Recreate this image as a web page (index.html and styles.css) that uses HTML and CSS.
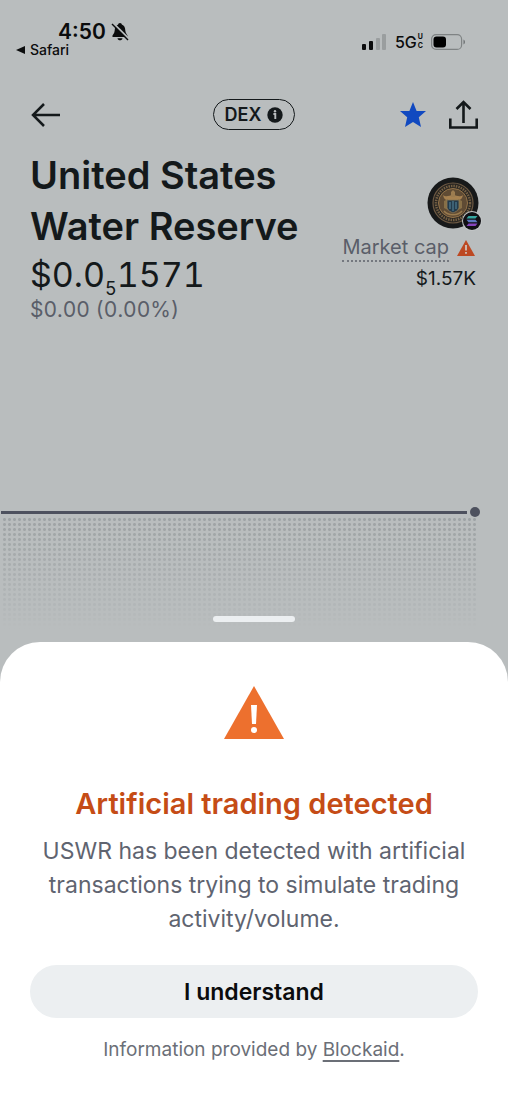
FILE: index.html
```html
<!DOCTYPE html>
<html lang="en">
<head>
    <meta charset="UTF-8">
    <meta name="viewport" content="width=device-width, initial-scale=1.0">
    <title>United States Water Reserve</title>
    <link rel="stylesheet" href="styles.css">
</head>
<body>
    <div class="status-bar">
        <div class="status-left">
            <div class="clock">
                <span>4:50</span>
                <svg width="18" height="20" viewBox="0 0 18 20">
                    <path d="M9 1C7.800 1 7.200 1.800 7.200 2.600C4.600 3.500 3.800 5.700 3.700 8.400C3.600 11.500 1.300 12.800 1.300 14.200C1.300 14.800 1.700 15 2.300 15H15.700C16.300 15 16.700 14.800 16.700 14.200C16.700 12.800 14.400 11.500 14.300 8.400C14.200 5.700 13.400 3.500 10.800 2.600C10.800 1.800 10.200 1 9 1ZM6.500 16.300C6.800 19 11.200 19 11.500 16.300Z" fill="#0b0c0d"/>
                    <path d="M2 1L18 17" stroke="#b9bdbe" stroke-width="2"/>
                    <path d="M1 2L17 18" stroke="#0b0c0d" stroke-width="1.500"/>
                </svg>
            </div>
            <a class="back-app" href="#">
                <svg width="10" height="8" viewBox="0 0 10 8"><path d="M0 4L9 0V8Z" fill="#0b0c0d"/></svg>
                Safari
            </a>
        </div>
        <div class="status-right">
            <svg width="25" height="16" viewBox="0 0 25 16">
                <rect x="0" y="10" width="4" height="6" rx="1" fill="#0b0c0d"/>
                <rect x="7" y="7" width="4" height="9" rx="1" fill="#0b0c0d"/>
                <rect x="14" y="4" width="4" height="12" rx="1" fill="#9a9e9f"/>
                <rect x="20" y="0" width="4" height="16" rx="1" fill="#9a9e9f"/>
            </svg>
            <div class="network">
                <span>5G</span>
                <span class="network-uc"><span>U</span><span>C</span></span>
            </div>
            <svg width="35" height="16" viewBox="0 0 35 16">
                <rect x="0.600" y="0.600" width="30" height="14.800" rx="4.500" fill="none" stroke="#7f8384" stroke-width="1.200"/>
                <rect x="2.500" y="2.500" width="12.500" height="11" rx="3" fill="#000"/>
                <path d="M32.500 5.500C34.500 6.500 34.500 9.500 32.500 10.500Z" fill="#6d7172"/>
            </svg>
        </div>
    </div>

    <div class="nav">
        <button class="icon-btn" aria-label="Back">
            <svg width="30" height="24" viewBox="0 0 30 24" fill="none" stroke="#14191b" stroke-width="2.500">
                <path d="M30 12H3M14 1L3 12L14 23"/>
            </svg>
        </button>
        <button class="dex">
            DEX
            <svg width="16" height="16" viewBox="0 0 16 16">
                <circle cx="8" cy="8" r="7.700" fill="#14191b"/>
                <circle cx="8" cy="4.300" r="1.200" fill="#b9bdbe"/>
                <path d="M6.400 7H8.300V12" fill="none" stroke="#b9bdbe" stroke-width="1.900"/>
            </svg>
        </button>
        <div class="nav-actions">
            <button class="icon-btn" aria-label="Favorite">
                <svg width="26" height="26" viewBox="0 0 26 26">
                    <path d="M13 0L16.600 9H26L18.800 15.300L21 25L13 20L5 25L7.200 15.300L0 9H9.400Z" fill="#1149c0"/>
                </svg>
            </button>
            <button class="icon-btn" aria-label="Share">
                <svg width="29" height="29" viewBox="0 0 29 29" fill="none" stroke="#14191b" stroke-width="2.600">
                    <path d="M14.500 23V2M7.500 9L14.500 2L21.500 9M1.300 18.500V27.500H27.700V18.500"/>
                </svg>
            </button>
        </div>
    </div>

    <div class="asset">
        <div class="asset-info">
            <h1>United States Water Reserve</h1>
            <div class="price">$0.0<sub>5</sub>1571</div>
            <div class="change">$0.00 (0.00%)</div>
        </div>
        <div class="asset-side">
            <svg class="token" width="56" height="56" viewBox="0 0 56 56">
                <circle cx="26" cy="26" r="25.500" fill="#17191a"/>
                <circle cx="26" cy="26" r="20" fill="#292622" stroke="#6d5943" stroke-width="1.200"/>
                <circle cx="26" cy="26" r="17" fill="none" stroke="#756044" stroke-width="2.500" stroke-dasharray="1.500 1"/>
                <circle cx="26" cy="26" r="14.500" fill="#5f4b34" stroke="#94744a" stroke-width="1"/>
                <path d="M16 18C20 21 22 18 26 18C30 18 32 21 36 18C35 23 32 24 26 23C20 24 17 23 16 18Z" fill="#a68150"/>
                <path d="M24 15L26 13L28 15V20H24Z" fill="#9c7c50"/>
                <path d="M17 24L21 22V33L17 31ZM35 24L31 22V33L35 31Z" fill="#887047"/>
                <path d="M20 23H32V31C31 34 28 35 26 36C24 35 21 34 20 31Z" fill="#243a4a" stroke="#8b7654" stroke-width="0.800"/>
                <path d="M23 25V32M29 25V32M26 24V34" stroke="#4c768b" stroke-width="1.300"/>
                <path d="M17 34C21 39 31 39 35 34" fill="none" stroke="#9a7b4e" stroke-width="1.500"/>
                <circle cx="45" cy="44" r="10" fill="#c3c7c8"/>
                <circle cx="45" cy="44" r="9" fill="#101014"/>
                <path d="M41.500 39H50.500L48.500 41.500H39.500Z" fill="#35a6a0"/>
                <path d="M39.500 42.800H48.500L50.500 45.300H41.500Z" fill="#5c77c0"/>
                <path d="M41.500 46.500H50.500L48.500 49H39.500Z" fill="#8745bd"/>
            </svg>
            <div class="market-cap">
                <a href="#">Market cap</a>
                <svg width="18" height="16" viewBox="0 0 18 16">
                    <path d="M9 0L18 16H0Z" fill="#bd4923"/>
                    <path d="M9 5V10.500M9 12V13.800" stroke="#cfc4bd" stroke-width="1.800"/>
                </svg>
            </div>
            <div class="cap-value">$1.57K</div>
        </div>
    </div>

    <div class="chart">
        <div class="chart-line"><span class="line"></span><span class="point"></span></div>
        <div class="chart-fill"></div>
    </div>

    <div class="sheet" role="dialog" aria-labelledby="sheetTitle">
        <div class="handle"></div>
        <svg width="62" height="54" viewBox="0 0 62 54">
            <path d="M31 0L61 53H1Z" fill="#ed702e"/>
            <path d="M28 19H34L33 38H29Z" fill="#fff"/>
            <circle cx="31" cy="44" r="3" fill="#fff"/>
        </svg>
        <h2 id="sheetTitle">Artificial trading detected</h2>
        <p class="message">USWR has been detected with artificial transactions trying to simulate trading activity/volume.</p>
        <button class="confirm">I understand</button>
        <p class="provider">Information provided by <a href="#">Blockaid</a>.</p>
    </div>
</body>
</html>
```
FILE: styles.css
```css
* {
    box-sizing: border-box;
}
body {
    margin: 0;
    min-height: 100vh;
    display: flex;
    flex-direction: column;
    background: #b9bdbe;
    color: #14191b;
    font-family: Inter, "Liberation Sans", sans-serif;
}
h1, h2, p {
    margin: 0;
}
svg {
    display: block;
    flex-shrink: 0;
}
button {
    font-family: inherit;
    color: inherit;
    background: none;
    border: none;
    padding: 0;
    cursor: pointer;
}
a {
    color: inherit;
    text-decoration: none;
}

/* status bar */
.status-bar {
    display: flex;
    justify-content: space-between;
    padding: 20px 42px 0 16px;
    color: #0b0c0d;
}
.clock {
    display: flex;
    align-items: center;
    gap: 5px;
    padding-left: 42px;
    font-size: 21px;
    font-weight: 600;
    line-height: 23px;
}
.back-app {
    display: flex;
    align-items: center;
    gap: 4px;
    font-size: 14px;
    font-weight: 500;
    line-height: 14px;
}
.status-right {
    display: flex;
    align-items: center;
    gap: 8px;
    height: 43px;
}
.network {
    display: flex;
    align-items: center;
    gap: 1px;
    font-size: 16px;
    font-weight: 500;
}
.network-uc {
    display: flex;
    flex-direction: column;
    gap: 1px;
    font-size: 7px;
    font-weight: 700;
    line-height: 8px;
}

/* navigation */
.nav {
    display: grid;
    grid-template-columns: 1fr auto 1fr;
    align-items: center;
    padding: 36px 30px 0;
}
.icon-btn {
    justify-self: start;
}
.dex {
    display: flex;
    align-items: center;
    gap: 6px;
    height: 31px;
    padding: 0 11px;
    border: 1px solid #14191b;
    border-radius: 16px;
    font-size: 18px;
    font-weight: 600;
}
.nav-actions {
    display: flex;
    align-items: center;
    justify-content: flex-end;
    gap: 23px;
}

/* asset */
.asset {
    display: flex;
    justify-content: space-between;
    padding: 20px 30px 0;
}
.asset-info {
    flex: 1;
}
h1 {
    max-width: 300px;
    font-size: 38px;
    font-weight: 600;
    line-height: 51px;
}
.price {
    font-size: 34px;
    line-height: 46px;
    font-variant-numeric: tabular-nums;
}
.price sub {
    font-size: 18px;
    line-height: 0;
}
.change {
    font-size: 21px;
    line-height: 24px;
    color: #5a5e69;
    font-variant-numeric: tabular-nums;
}
.asset-side {
    display: flex;
    flex-direction: column;
    align-items: flex-end;
    padding-top: 27px;
}
.token {
    margin-right: -5px;
}
.market-cap {
    display: flex;
    align-items: center;
    gap: 8px;
    margin-top: 1px;
    font-size: 20px;
    line-height: 26px;
    color: #5a5e69;
    padding-right: 3px;
}
.market-cap a {
    border-bottom: 2px dotted #74787f;
}
.cap-value {
    padding: 5px 2px 0 0;
    font-size: 19px;
    line-height: 24px;
}

/* chart */
.chart {
    flex: 1;
    display: flex;
    flex-direction: column;
    justify-content: flex-end;
}
.chart-line {
    display: flex;
    align-items: center;
    gap: 3px;
    padding: 0 28px 0 1px;
}
.line {
    flex: 1;
    height: 3px;
    background: #4d515e;
}
.point {
    width: 10px;
    height: 10px;
    border-radius: 50%;
    background: #4d515e;
}
.chart-fill {
    height: 125px;
    margin: 0 31px 0 2px;
    background-image: radial-gradient(circle, #9da2a4 1px, transparent 2px);
    background-size: 5px 5px;
    -webkit-mask-image: linear-gradient(#000, transparent 90%);
    mask-image: linear-gradient(#000, transparent 90%);
}

/* warning sheet */
.sheet {
    position: relative;
    display: flex;
    flex-direction: column;
    align-items: center;
    padding: 44px 30px 42px;
    background: #fff;
    border-radius: 40px 40px 0 0;
    text-align: center;
}
.handle {
    position: absolute;
    top: -26px;
    left: 50%;
    width: 82px;
    height: 6px;
    margin-left: -41px;
    border-radius: 3px;
    background: #eceff1;
}
h2 {
    margin-top: 46px;
    font-size: 29px;
    font-weight: 600;
    line-height: 36px;
    color: #c54c16;
}
.message {
    margin-top: 12px;
    font-size: 23px;
    line-height: 34px;
    color: #5f6470;
}
.confirm {
    width: 100%;
    height: 53px;
    margin-top: 29px;
    border-radius: 27px;
    background: #eceff1;
    color: #0b0c0d;
    font-size: 23px;
    font-weight: 600;
}
.provider {
    margin-top: 20px;
    font-size: 19px;
    line-height: 24px;
    color: #6b6f77;
}
.provider a {
    text-decoration: underline;
    text-decoration-thickness: 2px;
    text-underline-offset: 4px;
}
```
